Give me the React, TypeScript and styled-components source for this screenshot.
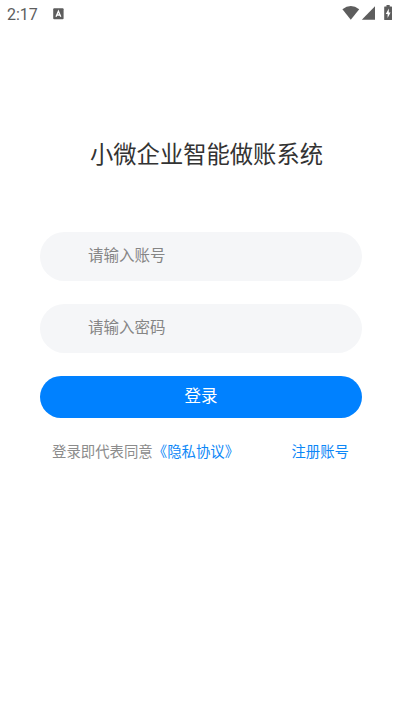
import React from 'react';
import styled, { createGlobalStyle } from 'styled-components';

const Global = createGlobalStyle`
  * { box-sizing: border-box; }
  body { margin: 0; background: #fff; font-family: Roboto, "Noto Sans CJK SC", sans-serif; }
`;
const Screen = styled.div`
  width: 400px; height: 712px; display: flex; flex-direction: column; background: #fff; overflow: hidden;
`;
const StatusBar = styled.header`
  height: 28px; flex: none; display: flex; align-items: center; padding: 0 8px 0 7px; color: #5d5d5d;
`;
const Time = styled.span`
  font-size: 16px; line-height: 28px; width: 46px; padding-top: 1px;
`;
const StatusIcons = styled.div`
  margin-left: auto; display: flex; align-items: flex-start; height: 18px;
`;
const Title = styled.h1`
  margin: 109px 0 0 13px; font-size: 23.3px; line-height: 36px; font-weight: 400; color: #333; text-align: center;
`;
const Form = styled.form`
  margin: 59px 38px 0 40px; display: flex; flex-direction: column;
`;
const Field = styled.input`
  height: 49px; border: 0; border-radius: 25px; background: #f5f6f8; padding: 0 48px 2px; margin-bottom: 23px;
  font: 400 15.5px/24px Roboto, "Noto Sans CJK SC", sans-serif; outline: none;
  &::placeholder { color: #858585; opacity: 1; }
`;
const Submit = styled.button`
  height: 42px; border: 0; border-radius: 21px; background: #0081ff; color: #fff; padding: 0;
  font: 400 16.5px/42px Roboto, "Noto Sans CJK SC", sans-serif;
`;
const Footer = styled.footer`
  margin: 24px 51px 0 52px; display: flex; justify-content: space-between; font-size: 14.4px; line-height: 22px; color: #8c8c8c;
`;
const Link = styled.a`color: #0c87f7;`;

function KeyboardIcon() {
  return (
    <svg width="11" height="12" viewBox="0 0 11 12">
      <rect x="0.2" y="0.3" width="10.4" height="11" rx="1" fill="#5d5d5d" />
      <path d="M3 8.8l2.4-5.6 2.4 5.6M4 7h2.8" stroke="#fff" strokeWidth="1.3" fill="none" />
    </svg>
  );
}

function SystemIcons() {
  return (
    <svg width="51" height="16" viewBox="0 0 51 16" fill="#5d5d5d">
      <path d="M1.4 4.2Q9.8-2 18.2 4.2L9.8 14.8z" />
      <path d="M20.8 14.8L34 1.3v13.5z" />
      <path d="M43.7 1.6h1.8V0h3.2v1.6h1.8q.5 0 .5.6v12.2q0 .6-.6.6h-6.6q-.6 0-.6-.6V2.2q0-.6.5-.6z" />
      <path d="M47.8 3.5l-3 5.4h1.8v4l3-5.5h-1.8z" fill="#fff" />
    </svg>
  );
}

export default function App() {
  return (
    <Screen>
      <Global />
      <StatusBar>
        <Time>2:17</Time>
        <KeyboardIcon />
        <StatusIcons><SystemIcons /></StatusIcons>
      </StatusBar>
      <Title>小微企业智能做账系统</Title>
      <Form>
        <Field placeholder="请输入账号" />
        <Field type="password" placeholder="请输入密码" />
        <Submit type="button">登录</Submit>
      </Form>
      <Footer>
        <span>登录即代表同意<Link>《隐私协议》</Link></span>
        <Link>注册账号</Link>
      </Footer>
    </Screen>
  );
}
